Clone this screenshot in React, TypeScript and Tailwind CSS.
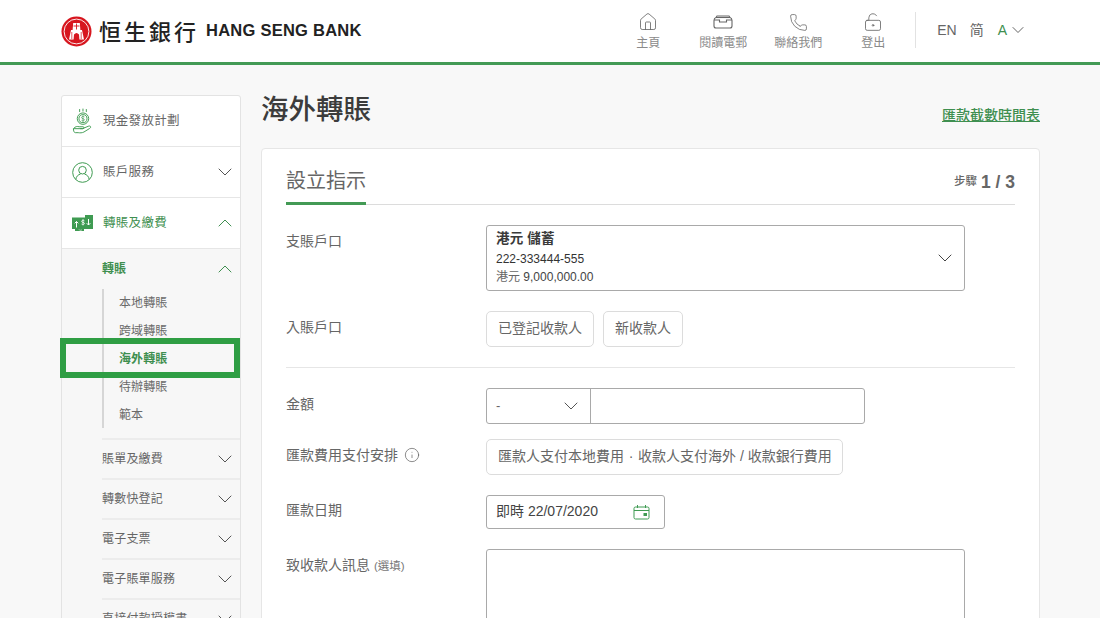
import { ChevronDown, ChevronUp, House, Phone, LockKeyholeOpen, Info } from 'lucide-react'

const FONT = 'font-["Liberation_Sans","Noto_Sans_CJK_TC",sans-serif]'

function Logo() {
  return (
    <svg width="31" height="31" viewBox="0 0 31 31" className="shrink-0">
      <circle cx="15.5" cy="15.5" r="15" fill="#d7161f" />
      <circle cx="15.5" cy="15.5" r="12.4" fill="none" stroke="#fff" strokeWidth="0.9" />
      <path d="M8 23.5 L10 14 L11.6 14 L12.2 7 L18.8 7 L19.4 14 L21 14 L23 23.5 L18.4 23.5 L18 18.5 Q15.5 15.5 13 18.5 L12.6 23.5 Z" fill="#fff" />
      <path d="M12.5 10h6M15.5 7.5v6" stroke="#d7161f" strokeWidth="0.9" />
      <path d="M10.8 16v7M20.2 16v7" stroke="#d7161f" strokeWidth="0.7" />
    </svg>
  )
}

function MailIcon() {
  return (
    <svg width="20" height="20" viewBox="0 0 20 20" fill="none" stroke="#666" strokeWidth="1.1">
      <path d="M1 8.5 Q1 6 3 5.5 L4 4 H16 L17 5.5 Q19 6 19 8.5 V14 Q19 16 17 16 H3 Q1 16 1 14 Z" />
      <path d="M1 8h5.5v2h7V8H19" />
      <path d="M3 5.5h14" />
    </svg>
  )
}

function NavItem({ icon, label, className }: { icon: React.ReactNode; label: string; className: string }) {
  return (
    <div className={`flex flex-col items-center ${className}`}>
      <div className="h-[20px] flex items-center justify-center">{icon}</div>
      <span className="text-[12px] leading-[16px] mt-[3px] text-[#8a8a8a] whitespace-nowrap">{label}</span>
    </div>
  )
}

function CashIcon() {
  return (
    <svg width="22" height="27" viewBox="0 0 22 27" fill="none" stroke="#3f9b52" strokeWidth="1">
      <path d="M8 .5v3M11.5 0v3M15 .5v3" />
      <circle cx="11.5" cy="10.5" r="6" />
      <circle cx="11.5" cy="10.5" r="4.2" />
      <path d="M13 8.7c-1-.9-3-.6-3 .7 0 1.5 3 .8 3 2.3 0 1.2-2 1.5-3 .6M11.5 7.2v6.6" strokeWidth="0.7" />
      <path d="M1.5 21c2-2.5 4-2.5 6-2h4c1.5 0 1.5 2 0 2H8.5" />
      <path d="M11 21l6-2.5c2.5-1 3.5 1 1.5 2.3L12.5 24.5c-2 1-4 1-6 .7H3.5C2 25.2 1.5 23 1.5 21Z" />
    </svg>
  )
}

function PersonIcon() {
  return (
    <svg width="21" height="21" viewBox="0 0 21 21" fill="none" stroke="#3f9b52" strokeWidth="1">
      <circle cx="10.5" cy="10.5" r="9.8" />
      <circle cx="10.5" cy="8.2" r="3.8" />
      <path d="M3.8 17.5c.4-3.2 2.5-5 4.7-5.4M17.2 17.5c-.4-3.2-2.5-5-4.7-5.4" />
    </svg>
  )
}

function TransferIcon() {
  return (
    <svg width="21" height="16" viewBox="0 0 21 16">
      <path d="M0 2.5h13V0h8v14h-9v2H3v-2H0Z" fill="#3f9b52" />
      <path d="M4.5 12.5V6.5M2.7 8.3 4.5 6.5l1.8 1.8M16.5 4v6M14.7 8.2l1.8 1.8 1.8-1.8" fill="none" stroke="#fff" strokeWidth="1" />
      <path d="M12.4 5.8c-.8-.8-2.8-.6-2.8.6 0 1.4 2.9.7 2.9 2 0 1.1-2 1.3-3 .6M11 4.2v6.2" fill="none" stroke="#fff" strokeWidth="0.8" />
      <path d="M7 14.5c.5 1 2 1 3 .2" fill="none" stroke="#fff" strokeWidth="0.6" />
    </svg>
  )
}

function MainMenuRow({ icon, label, chevron, green }: { icon: React.ReactNode; label: string; chevron?: 'up' | 'down'; green?: boolean }) {
  return (
    <div className="h-[51px] border-b border-[#e6e6e6] flex items-center pl-[10px] pr-[3px]">
      <div className="w-[21px] flex justify-center shrink-0">{icon}</div>
      <span className={`ml-[10px] text-[12.5px] tracking-[0.3px] ${green ? 'text-[#3f8f50]' : 'text-[#666]'}`}>{label}</span>
      <span className="ml-auto">
        {chevron === 'down' && <ChevronDown size={24} strokeWidth={1} color="#555" />}
        {chevron === 'up' && <ChevronUp size={24} strokeWidth={1} color="#3f8f50" />}
      </span>
    </div>
  )
}

function SubRow({ label }: { label: string }) {
  return (
    <div className="h-[40px] ml-[40px] border-t-2 border-[#ececec] flex items-center pr-[3px] justify-between">
      <span className="text-[12px] text-[#666] tracking-[0.2px]">{label}</span>
      <ChevronDown size={24} strokeWidth={1} color="#555" />
    </div>
  )
}

function Sidebar() {
  const transfers = ['本地轉賬', '跨域轉賬', '海外轉賬', '待辦轉賬', '範本']
  return (
    <aside className="relative w-[180px] shrink-0 mt-[30px] ml-[61px]">
      <div className="bg-white border border-[#e3e3e3] rounded-[3px] h-[560px] overflow-hidden">
        <MainMenuRow icon={<CashIcon />} label="現金發放計劃" />
        <MainMenuRow icon={<PersonIcon />} label="賬戶服務" chevron="down" />
        <MainMenuRow icon={<TransferIcon />} label="轉賬及繳費" chevron="up" green />
        <div className="bg-[#f7f7f7] h-full">
          <div className="h-[40px] pl-[40px] pr-[3px] flex items-center justify-between">
            <span className="text-[12px] font-bold text-[#3f8f50]">轉賬</span>
            <ChevronUp size={24} strokeWidth={1} color="#3f8f50" />
          </div>
          <div className="ml-[40px] border-l-2 border-[#d6d6d6] h-[139px] pl-[15px]">
            {transfers.map(t => (
              <div key={t} className={`h-[28px] flex items-center text-[12px] tracking-[0.1px] ${t === '海外轉賬' ? 'font-bold text-[#3f8f50]' : 'text-[#6a6a6a]'}`}>
                {t}
              </div>
            ))}
          </div>
          <div className="h-[10px]" />
          <SubRow label="賬單及繳費" />
          <SubRow label="轉數快登記" />
          <SubRow label="電子支票" />
          <SubRow label="電子賬單服務" />
          <SubRow label="直接付款授權書" />
        </div>
      </div>
      {/* highlight over the active item */}
      <div className="absolute left-[-1px] top-[243px] w-[180px] h-[40px] border-[6px] border-[#2f9e44]" />
    </aside>
  )
}

function FormRow({ label, children, className }: { label: React.ReactNode; children: React.ReactNode; className: string }) {
  return (
    <div className={`flex ${className}`}>
      <div className="w-[200px] shrink-0 text-[14px] leading-[20px] text-[#666]">{label}</div>
      {children}
    </div>
  )
}

const pill = 'h-[36px] flex items-center border border-[#dcdcdc] rounded-[5px] pb-[2px] text-[14px] text-[#666]'

export default function App() {
  return (
    <div className={`h-[618px] overflow-hidden bg-[#f8f8f8] ${FONT}`}>
      <header className="h-[65px] bg-white border-b-[3px] border-[#439a55] flex items-center pl-[61px]">
        <Logo />
        <span className="ml-[7px] -mt-[3px] text-[22px] text-[#222] tracking-[3px] font-['Noto_Sans_CJK_TC'] font-medium leading-none whitespace-nowrap">恒生銀行</span>
        <span className="ml-[7px] -mt-[1px] text-[16.5px] font-bold text-[#222] tracking-[0.25px] whitespace-nowrap">HANG SENG BANK</span>
        <nav className="ml-auto flex items-start h-full pt-[12px]">
          <NavItem icon={<House size={20} strokeWidth={1} color="#666" />} label="主頁" className="w-[24px]" />
          <NavItem icon={<MailIcon />} label="閱讀電郵" className="w-[48px] ml-[39px]" />
          <NavItem icon={<Phone size={19} strokeWidth={1} color="#666" />} label="聯絡我們" className="w-[48px] ml-[27px]" />
          <NavItem icon={<LockKeyholeOpen size={20} strokeWidth={1} color="#666" />} label="登出" className="w-[24px] ml-[39px]" />
          <div className="w-px h-[36px] bg-[#e2e2e2] ml-[30px]" />
          <div className="ml-[21px] flex items-center h-[36px] text-[14px] text-[#666]">
            <span>EN</span>
            <span className="ml-[13px]">简</span>
            <span className="ml-[14px] text-[#3f8f50]">A</span>
            <ChevronDown size={20} strokeWidth={1.1} color="#555" className="ml-[1px]" />
          </div>
          <div className="w-[72px]" />
        </nav>
      </header>

      <div className="flex">
        <Sidebar />
        <main className="w-[779px] ml-[20px] mt-[30px]">
          <div className="h-[53px] flex justify-between">
            <h1 className="text-[27.5px] leading-[30px] font-medium text-[#3c3c3c]">海外轉賬</h1>
            <a className="text-[14px] leading-[18px] font-medium text-[#3f8f50] underline mt-[11px]">匯款截數時間表</a>
          </div>
          <section className="bg-white border border-[#e6e6e6] rounded-[4px] h-[520px] px-[24px]">
            <div className="h-[56px] border-b border-[#dcdcdc] flex justify-between items-end">
              <div className="h-[56px] w-[80px] border-b-[3px] border-[#439a55] -mb-px flex items-start pt-[20px]">
                <span className="text-[20px] leading-[24px] text-[#666] whitespace-nowrap">設立指示</span>
              </div>
              <div className="self-start mt-[23px] flex items-center text-[#666]">
                <span className="text-[11.5px] font-medium">步驟</span>
                <span className="ml-[4px] text-[17.5px] leading-[20px] font-bold">1 / 3</span>
              </div>
            </div>

            <FormRow label={<span className="block mt-[6px]">支賬戶口</span>} className="mt-[20px]">
              <div className="w-[479px] h-[66px] border border-[#a9a9a9] rounded-[3px] pl-[9px] pr-[7px] flex items-center justify-between">
                <div className="text-[12px] text-[#333] -mt-[2px]">
                  <div className="font-bold text-[13.5px] leading-[22px] tracking-[0.2px] text-[#3a3a3a]">港元 儲蓄</div>
                  <div className="leading-[18px]">222-333444-555</div>
                  <div className="leading-[18px] text-[#444]"><span className="text-[#666]">港元</span> 9,000,000.00</div>
                </div>
                <ChevronDown size={24} strokeWidth={1} color="#444" />
              </div>
            </FormRow>

            <FormRow label={<span className="block mt-[6px]">入賬戶口</span>} className="mt-[20px]">
              <div className="flex gap-[9px]">
                <div className={`${pill} w-[108px] justify-center`}>已登記收款人</div>
                <div className={`${pill} w-[80px] justify-center`}>新收款人</div>
              </div>
            </FormRow>

            <div className="h-px bg-[#e6e6e6] mt-[20px] w-[729px]" />

            <FormRow label={<span className="block mt-[6px]">金額</span>} className="mt-[20px]">
              <div className="w-[379px] h-[36px] border border-[#a9a9a9] rounded-[3px] flex">
                <div className="w-[104px] border-r border-[#a9a9a9] flex items-center justify-between pl-[9px] pr-[7px] text-[13px] text-[#666]">
                  <span>-</span>
                  <ChevronDown size={24} strokeWidth={1} color="#555" />
                </div>
              </div>
            </FormRow>

            <FormRow
              label={
                <span className="flex items-center mt-[6px]">
                  匯款費用支付安排
                  <Info size={16} strokeWidth={1} color="#555" className="ml-[6px]" />
                </span>
              }
              className="mt-[15px]"
            >
              <div className={`${pill} w-[357px] pl-[11px] whitespace-nowrap`}>
                匯款人支付本地費用<span className="inline-block w-[14px] text-center">·</span>收款人支付海外 / 收款銀行費用
              </div>
            </FormRow>

            <FormRow label={<span className="block mt-[5px]">匯款日期</span>} className="mt-[20px]">
              <div className="w-[179px] h-[34px] border border-[#a9a9a9] rounded-[3px] pl-[9px] pr-[14px] flex items-center justify-between text-[14px] text-[#444]">
                <span className="-mt-[1px]">即時 22/07/2020</span>
                <svg width="17" height="15" viewBox="0 0 17 15" fill="none" stroke="#3f9b52" strokeWidth="1">
                  <rect x="1" y="2" width="15" height="12" rx="1.5" />
                  <path d="M1 5.5h15M4.5 0v3M12.5 0v3" />
                  <rect x="11" y="8.5" width="2.5" height="2" fill="#3f9b52" />
                </svg>
              </div>
            </FormRow>

            <FormRow
              label={<span className="block mt-[6px]">致收款人訊息 <span className="text-[11.5px] text-[#777]">(選填)</span></span>}
              className="mt-[20px]"
            >
              <div className="w-[479px] h-[100px] border border-[#a9a9a9] rounded-[3px]" />
            </FormRow>
          </section>
        </main>
      </div>
    </div>
  )
}
